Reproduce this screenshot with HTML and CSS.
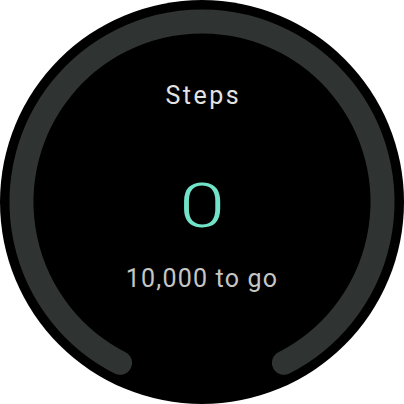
FILE: index.html
```html
<!DOCTYPE html>
<html>
<head>
<meta charset="utf-8">
<link rel="stylesheet" href="styles.css">
</head>
<body>
<div class="watch">
  <svg class="ring" width="404" height="404" viewBox="0 0 404 404">
    <path d="M 120.08 362.82 A 180.5 180.5 0 1 1 283.92 362.82" fill="none" stroke="#2f3331" stroke-width="24" stroke-linecap="round"/>
  </svg>
  <div class="content">
    <div class="title">Steps</div>
    <div class="count">0</div>
    <div class="remaining">10,000 to go</div>
  </div>
</div>
</body>
</html>
```
FILE: styles.css
```css
html, body {
  margin: 0;
  padding: 0;
  background: #ffffff;
}
.watch {
  position: relative;
  width: 404px;
  height: 404px;
  border-radius: 50%;
  background: #000000;
  overflow: hidden;
}
.ring {
  position: absolute;
  left: 0;
  top: 0;
}
.content {
  display: flex;
  flex-direction: column;
  align-items: center;
  padding-top: 81px;
  font-family: Roboto, "Noto Sans", sans-serif;
}
.title {
  font-size: 25px;
  line-height: 30px;
  color: #e3e3e3;
  letter-spacing: 2.5px;
  margin-bottom: 64px;
  padding-left: 2.5px;
}
.count {
  font-size: 62px;
  line-height: 62px;
  font-weight: 300;
  color: #72e3c8;
  transform: scaleX(1.33);
  margin-bottom: 27px;
}
.remaining {
  font-size: 25px;
  line-height: 30px;
  color: #c4c7c5;
  letter-spacing: 1.2px;
}
```
